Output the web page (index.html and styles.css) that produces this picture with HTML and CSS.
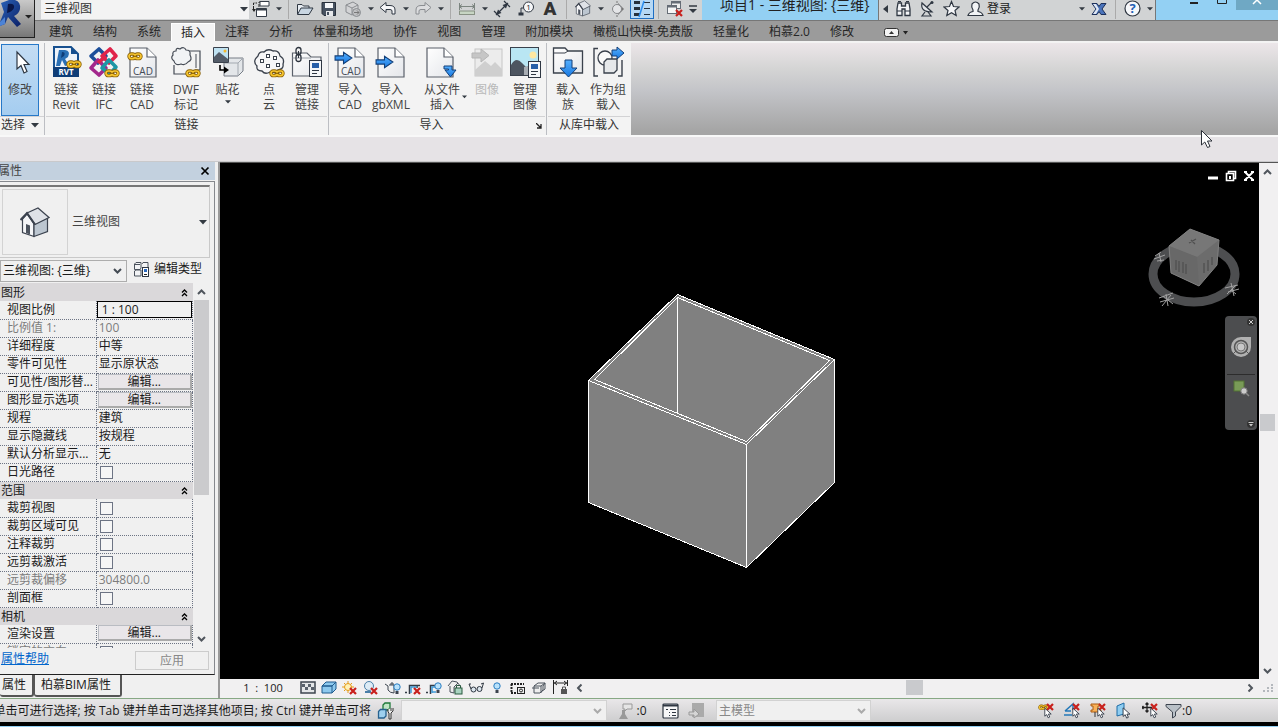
FILE: index.html
```html
<!DOCTYPE html>
<html lang="zh-CN">
<head>
<meta charset="utf-8">
<title>项目1 - 三维视图: {三维}</title>
<link rel="stylesheet" href="styles.css">
</head>
<body>
<svg class="defs" aria-hidden="true">
  <defs>
    <linearGradient id="gBlue" x1="0" y1="0" x2="0" y2="1"><stop offset="0" stop-color="#55b0ff"/><stop offset="1" stop-color="#1878e0"/></linearGradient>
    <linearGradient id="gPage" x1="0" y1="0" x2="1" y2="1"><stop offset="0" stop-color="#fff"/><stop offset="1" stop-color="#e4e6ea"/></linearGradient>
    <linearGradient id="gR" x1="0" y1="0" x2="1" y2="1"><stop offset="0" stop-color="#2a62b8"/><stop offset="1" stop-color="#0b1f66"/></linearGradient>
    <symbol id="chain" viewBox="0 0 16 9"><g fill="none"><g stroke="#8a6208" stroke-width="3.4"><rect x="2" y="2" width="6" height="4.6" rx="2.3"/><rect x="8" y="2" width="6" height="4.6" rx="2.3"/></g><g stroke="#f8c62e" stroke-width="1.700"><rect x="2" y="2" width="6" height="4.600" rx="2.300"/><rect x="8" y="2" width="6" height="4.600" rx="2.300"/></g><path d="M5.500 4.300H10.500" stroke="#8a6208" stroke-width="1.200"/></g></symbol>
    <symbol id="page" viewBox="0 0 28 31"><path d="M1 1H18L27 10V30H1Z" fill="url(#gPage)" stroke="#5b616b" stroke-width="1.200"/><path d="M18 1V10H27" fill="#fff" stroke="#5b616b" stroke-width="1.200"/></symbol>
    <symbol id="arrR" viewBox="0 0 18 13"><path d="M1 4.500H9V1L17 6.500L9 12V8.500H1Z" fill="url(#gBlue)" stroke="#123f78"/></symbol>
    <symbol id="down" viewBox="0 0 8 5"><path d="M0 0H8L4 4.500Z" fill="#333a42"/></symbol>
    <symbol id="redx" viewBox="0 0 8 8"><path d="M1 1L7 7M7 1L1 7" stroke="#c8201c" stroke-width="2.200"/></symbol>
    <symbol id="cur" viewBox="0 0 10 14"><path d="M1 1V11L3.500 9L5.200 13L7.200 12L5.500 8.300H9Z" fill="#fff" stroke="#222b38"/></symbol>
    <symbol id="bulb" viewBox="0 0 8 12"><circle cx="4" cy="4" r="3.200" fill="#b9e2fb" stroke="#2a7cc0"/><path d="M2.500 8H5.500V11H2.500Z" fill="#3c434e"/></symbol>
    <symbol id="house" viewBox="0 0 30 31"><path d="M2.500 12L7 7L14 17V29.500L2.500 25.500Z" fill="#f4f5f7" stroke="#3b424e" stroke-width="1.200"/><path d="M14 17L27.500 11V24.500L14 29.500Z" fill="#bcc6d0" stroke="#3b424e" stroke-width="1.200"/><path d="M7 6L18 1L29 10.500L15 17.500Z" fill="#dfe2e7" stroke="#3b424e" stroke-width="1.200"/><path d="M.5 13L7 6L15 17.500" fill="none" stroke="#3b424e" stroke-width="2"/><path d="M6 17L10 18.500V27.500L6 26Z" fill="#4c535e"/></symbol>
    <symbol id="dbl" viewBox="0 0 7 8"><path d="M1 3.500L3.500 1L6 3.500M1 7L3.500 4.500L6 7" fill="none" stroke="#000" stroke-width="1.300"/></symbol>
    <symbol id="chev" viewBox="0 0 9 6"><path d="M1 1L4.500 4.500L8 1" fill="none" stroke="currentColor" stroke-width="2"/></symbol>
    <symbol id="prop" viewBox="0 0 13 17"><rect x=".5" y=".5" width="12" height="16" fill="#f4f6f8" stroke="#2e3642"/><rect x="3" y="3" width="7" height="5" fill="#275fa8"/><path d="M3 10.500H10M3 13.500H8" stroke="#2e3642"/></symbol>
  </defs>
</svg>

<header class="top">
  <button class="app" aria-label="应用程序菜单">
    <svg width="35" height="38" viewBox="0 0 35 38"><path d="M1 3L9 0H15Q21 2 20 9Q19 14 14 16L21 24L17 27L8 17L5 24L0 26V22L4 12Z" fill="url(#gR)"/><path d="M8 4Q15 3 14 8Q12 12 7 13Z" fill="#0a1748"/><path d="M0 22L5 17V24L0 26Z" fill="#4c83d6"/><path d="M25 15H32L28.500 18.500Z" fill="#222"/></svg>
  </button>
  <div class="title">
    <label class="pick pick-view"><select aria-label="视图"><option>三维视图</option></select><svg width="8" height="5"><use href="#down"/></svg></label>
    <nav class="qat" aria-label="快速访问工具栏">
      <button class="q" aria-label="切换窗口"><svg width="18" height="18"><path d="M1.500 9V3H5M17 2H7V7" fill="none" stroke="#222" stroke-dasharray="3 1"/><path d="M8 1.500H17V6H8ZM4.500 8.500H14.500V16.500H4.500Z" fill="#fff" stroke="#353c47"/><path d="M4.500 9.500H14.500" stroke="#353c47" stroke-width="2"/><path d="M0 9L2 12L4 9" fill="#222"/></svg></button>
      <button class="dd" aria-label="更多窗口"><svg width="6" height="4"><use href="#down"/></svg></button><i class="sep"></i>
      <button class="q" aria-label="打开"><svg width="18" height="16"><path d="M1.500 13V3.500H6L7.500 5H13V7" fill="#e8edf2" stroke="#2f3742"/><path d="M1.500 13.500L5 7H17L13 13.500Z" fill="#c9d6e2" stroke="#2f3742"/></svg></button>
      <button class="q" aria-label="保存"><svg width="16" height="16"><path d="M1 1.500H14.500V14.500H3L1 12.500Z" fill="#465160" stroke="#28303b"/><rect x="4" y="2" width="8" height="5" fill="#f5f6f8"/><rect x="5" y="10" width="7" height="5" fill="#e6e8eb"/><rect x="6" y="11" width="2" height="3" fill="#465160"/></svg></button>
      <button class="q" aria-label="同步"><svg width="18" height="18"><path d="M2 5L9 2L14 5V12L8 15L2 12Z" fill="#d2d3d5" stroke="#898c90"/><path d="M2 5L8 8L14 5M8 8V15" fill="none" stroke="#898c90"/><circle cx="12.500" cy="12.500" r="4" fill="#c0c1c3" stroke="#898c90"/><path d="M10 12.500H15M13 10.500L15 12.500L13 14.500" stroke="#777" fill="none"/></svg></button>
      <button class="dd" aria-label="同步选项"><svg width="6" height="4"><use href="#down"/></svg></button>
      <button class="q" aria-label="撤销"><svg width="18" height="16"><path d="M1 6.500L7 1.500V4.500H11Q16 4.500 16 9V13H13V10Q13 8.500 11 8.500H7V11.500Z" fill="#f6f7f9" stroke="#2f3742"/></svg></button>
      <button class="dd" aria-label="撤销列表"><svg width="6" height="4"><use href="#down"/></svg></button>
      <button class="q" aria-label="重做"><svg width="18" height="16"><path d="M17 6.500L11 1.500V4.500H7Q2 4.500 2 9V13H5V10Q5 8.500 7 8.500H11V11.500Z" fill="#dcdddf" stroke="#8a8d91"/></svg></button>
      <button class="dd" aria-label="重做列表"><svg width="6" height="4"><use href="#down"/></svg></button><i class="sep"></i>
      <button class="q" aria-label="测量"><svg width="18" height="14"><path d="M1 4.500H17M1.500 1V8M16.500 1V8M1 4.500L4 2.500M1 4.500L4 6.500M17 4.500L14 2.500M17 4.500L14 6.500" stroke="#7c8580"/><rect x="1.500" y="9" width="15" height="3.500" fill="#c7d5c3" stroke="#889184"/></svg></button>
      <button class="dd" aria-label="测量选项"><svg width="6" height="4"><use href="#down"/></svg></button>
      <button class="q" aria-label="对齐尺寸标注"><svg width="18" height="18"><path d="M3 15L15 3M1 11L7 17M11 1L17 7" stroke="#2f3742" stroke-width="1.200"/><path d="M3 15L5 9.500L8.500 13ZM15 3L9.500 5L13 8.500Z" fill="#2f3742"/></svg></button>
      <button class="q" aria-label="按类别标记"><svg width="18" height="18"><circle cx="11.500" cy="7" r="5" fill="#f6f7f9" stroke="#2f3742"/><text class="g-tag" x="11.500" y="10">1</text><path d="M6.500 8H4V14" fill="none" stroke="#2f3742"/><path d="M1.500 14H6.500" stroke="#2f3742" stroke-width="3"/></svg></button>
      <button class="q letter">A</button><i class="sep"></i>
      <button class="q" aria-label="默认三维视图"><svg width="16" height="17"><use href="#house"/></svg></button>
      <button class="dd" aria-label="三维视图选项"><svg width="6" height="4"><use href="#down"/></svg></button>
      <button class="q" aria-label="剖面"><svg width="14" height="16"><path d="M6 2V0M6 14V16" stroke="#777"/><path d="M7 2L13 8L7 14Z" fill="#777"/><circle cx="6" cy="8" r="4.500" fill="#e4e5e7" stroke="#85878a"/></svg></button>
      <button class="q on" aria-label="细线"><svg width="18" height="18"><path d="M1 2.500H7M1 8.500H7M1 14.500H7" stroke="#26303d" stroke-width="3"/><path d="M11 2.500H17M11 8.500H17M11 14.500H17" stroke="#26303d"/><path d="M11 1L6 17" stroke="#2c8dee" stroke-width="1.500"/></svg></button><i class="sep"></i>
      <button class="q" aria-label="关闭隐藏窗口"><svg width="18" height="18"><rect x="5.500" y="1.500" width="9" height="7" fill="#eee" stroke="#666d76"/><rect x="1.500" y="5.500" width="9" height="8" fill="#f5f6f7" stroke="#666d76"/><path d="M5 2.500H15M1 6.500H11" stroke="#666d76" stroke-width="2"/><svg x="9" y="9" width="8" height="8"><use href="#redx"/></svg></svg></button>
      <button class="dd" aria-label="自定义"><svg width="8" height="8"><path d="M0 1H8" stroke="#333a42" stroke-width="1.500"/><path d="M0 4H8L4 8Z" fill="#333a42"/></svg></button>
    </nav>
    <h1 class="doc">项目1 - 三维视图: {三维}</h1>
    <nav class="info" aria-label="信息中心">
      <button class="dd wide" aria-label="折叠"><svg width="5" height="8"><path d="M5 0V8L0 4Z" fill="#333a42"/></svg></button>
      <button class="q" aria-label="搜索"><svg width="17" height="17"><path d="M3 3L2 9V15.500H7V9H10V15.500H15V9L14 3H10.500V6H6.500V3Z" fill="#f4f5f7" stroke="#2f3742" stroke-width="1.300"/><path d="M2 11H7M10 11H15M3 1.500H6M11 1.500H14" stroke="#2f3742"/></svg></button>
      <button class="q" aria-label="通讯中心"><svg width="17" height="17"><path d="M3 3Q1 12 13 12Z" fill="#e4e7ea" stroke="#2f3742" stroke-width="1.200"/><path d="M8 7L13 2M6 12L3 16H12L9 12" fill="none" stroke="#2f3742" stroke-width="1.200"/><circle cx="13" cy="2.500" r="1.500" fill="#2f3742"/></svg></button>
      <button class="q" aria-label="收藏夹"><svg width="17" height="17"><path d="M8.500 1.500L10.500 6.500L16 7L12 10.500L13.200 15.500L8.500 12.800L3.800 15.500L5 10.500L1 7L6.500 6.500Z" fill="#f5f6f8" stroke="#2f3742" stroke-width="1.200"/></svg></button>
      <button class="q" aria-label="用户"><svg width="17" height="17"><path d="M1 15.500Q2 12 6 11.500V10Q4 7 5 4Q8.500 0 12 4Q13 7 11 10V11.500Q15 12 16 15.500Z" fill="#f2f4f6" stroke="#2f3742" stroke-width="1.200"/></svg></button>
      <button class="login">登录</button>
      <button class="dd" aria-label="登录选项"><svg width="6" height="4"><use href="#down"/></svg></button>
      <button class="q" aria-label="Exchange"><svg width="16" height="14"><path d="M1 1.500H6L8 4.500L10 1.500H15L11 7L15 12.500H10L8 9.500L6 12.500H1L5 7Z" fill="#4a73bb" stroke="#1d3059"/><path d="M2 2H5L8 7L5 12H2L5.500 7Z" fill="#dfe7f3"/></svg></button><i class="sep"></i>
      <button class="q" aria-label="帮助"><svg width="17" height="17"><circle cx="8.500" cy="8.500" r="7.500" fill="#f6f8fb" stroke="#2f3742" stroke-width="1.200"/><text class="g-help" x="8.500" y="13">?</text></svg></button>
      <button class="dd" aria-label="帮助选项"><svg width="6" height="4"><use href="#down"/></svg></button>
    </nav>
    <div class="win">
      <button aria-label="最小化"><svg width="10" height="10"><path d="M1 3H9" stroke="#222" stroke-width="2"/></svg></button>
      <button aria-label="最大化"><svg width="10" height="10"><path d="M.5 0V3.500H9.500V0" fill="none" stroke="#222"/></svg></button>
      <button class="x" aria-label="关闭"><svg width="10" height="10"><path d="M1 4L5 0L9 4" fill="none" stroke="#fff" stroke-width="1.500"/></svg></button>
    </div>
  </div>
  <nav class="tabs" aria-label="功能区选项卡">
    <button>建筑</button><button>结构</button><button>系统</button><button class="act">插入</button><button>注释</button><button>分析</button><button>体量和场地</button><button>协作</button><button>视图</button><button>管理</button><button>附加模块</button><button>橄榄山快模-免费版</button><button>轻量化</button><button>柏慕2.0</button><button>修改</button>
    <button class="mini" aria-label="最小化功能区"><svg width="25" height="9"><rect x=".5" y=".5" width="14" height="8" rx="2" fill="#f3f3f3" stroke="#333"/><path d="M5 6H10L7.500 3Z" fill="#333"/><path d="M19 3H24L21.500 6.500Z" fill="#222"/></svg></button>
  </nav>
</header>

<section class="ribbon" aria-label="插入">
  <div class="panel p-sel">
    <div class="cmds"><button class="cmd mod"><svg width="32" height="32"><path d="M13 6V23L17 19.500L20 27L23 25.500L20 18.500H25Z" fill="#fff" stroke="#2d3642" stroke-width="1.200"/></svg><span>修改</span></button></div>
    <button class="cap">选择 <svg width="8" height="5"><use href="#down"/></svg></button>
  </div>
  <div class="panel p-link">
    <div class="cmds">
      <button class="cmd"><svg width="32" height="32"><path d="M4 1H21L28 8V30H4Z" fill="#eef3f9" stroke="#17508f" stroke-width="2"/><path d="M21 1V8H28" fill="#17508f"/><path d="M9 4H15Q21 5 18 11L15 13L19 19L15 20L12 14L10 20H6Z" fill="#2a6fb4"/><path d="M12 6Q16 6 14 10L11 12Z" fill="#0f3d77"/><rect x="3" y="21" width="26" height="10" fill="#0f3d77"/><text class="g-rvt" x="16" y="29">RVT</text><svg x="16" y="14" width="16" height="9"><use href="#chain"/></svg></svg><span>链接<br>Revit</span></button>
      <button class="cmd"><svg width="32" height="32"><g fill="none" stroke-width="3.600" stroke-linejoin="round"><path d="M3 10L11 3L18 10L10 17Z" stroke="#1c4f9a"/><path d="M14 10L22 3L28 10L21 17Z" stroke="#e0244a"/><path d="M3 22L10 14L18 22L11 29Z" stroke="#a3288c"/><path d="M14 22L21 14L28 21L22 28Z" stroke="#1d97a5"/><path d="M10 17L18 10" stroke="#e0244a"/></g><svg x="16" y="23" width="16" height="9"><use href="#chain"/></svg></svg><span>链接<br>IFC</span></button>
      <button class="cmd"><svg width="32" height="32"><svg x="3" y="1" width="28" height="31"><use href="#page"/></svg><svg x="1" y="6" width="16" height="9"><use href="#chain"/></svg><text class="g-cad" x="17" y="29">CAD</text></svg><span>链接<br>CAD</span></button>
      <button class="cmd"><svg width="32" height="32"><path d="M10 5H30V24H25M4 19V28H16" fill="none" stroke="#454b55" stroke-width="1.200"/><path d="M26 8V22" stroke="#454b55"/><path d="M6 5Q6 1 10 3Q14 0 16 4Q21 4 20 9Q23 14 18 16Q15 20 11 18Q5 20 4 15Q0 12 3 9Q2 5 6 5Z" fill="#f1f3f5" stroke="#454b55" stroke-width="1.200"/><svg x="15" y="23" width="16" height="9"><use href="#chain"/></svg></svg><span>DWF<br>标记</span></button>
      <button class="cmd"><svg width="32" height="32"><path d="M12 17L17 12H31V25L26 30H12Z" fill="#e3e6e9" stroke="#767d86"/><path d="M12 17H26V30M26 17L31 12" fill="none" stroke="#a3a9b0"/><path d="M1.500 1.500H16.500V16.500H1.500Z" fill="#bfe2f2" stroke="#3a414c"/><path d="M2 11L7 6L16 13V16H2Z" fill="#535c68"/><circle cx="13" cy="5" r="1.500" fill="#f4b72a"/><path d="M8 19V24H13" fill="none" stroke="#000" stroke-width="1.600"/><path d="M12 20.500L17 24L12 27.500Z"/></svg><span>贴花</span><svg class="tick" width="6" height="4"><use href="#down"/></svg></button>
      <button class="cmd gapped"><svg width="32" height="32"><path d="M5 10Q6 5 11 6Q15 2 20 5Q26 4 27 10Q32 13 30 18Q31 23 25 24Q22 28 17 26Q12 29 9 25Q3 25 4 20Q-1 15 5 10Z" fill="#f6f6f7" stroke="#3a414c" stroke-width="1.300"/><g fill="#fff" stroke="#3a414c"><rect x="13.500" y="8.500" width="3" height="3"/><rect x="20.500" y="10.500" width="3" height="3"/><rect x="7.500" y="13.500" width="3" height="3"/><rect x="13.500" y="18.500" width="3" height="3"/><rect x="23.500" y="17.500" width="3" height="3"/></g><svg x="16" y="23" width="16" height="9"><use href="#chain"/></svg></svg><span>点<br>云</span></button>
      <button class="cmd"><svg width="32" height="32"><path d="M1.500 7V30H30V11H20L16 7Z" fill="url(#gPage)" stroke="#5b616b" stroke-width="1.200"/><path d="M1.500 12H20" stroke="#9aa0a8"/><g fill="none" stroke="#2e353f" stroke-width="1.300"><rect x="5" y="1.500" width="5" height="7" rx="2.500"/><rect x="5" y="8.500" width="5" height="7" rx="2.500"/></g><path d="M7.500 5V12" stroke="#2e353f"/><svg x="18" y="14" width="13" height="17"><use href="#prop"/></svg></svg><span>管理<br>链接</span></button>
    </div>
    <div class="cap">链接</div>
  </div>
  <div class="panel p-imp">
    <div class="cmds">
      <button class="cmd"><svg width="32" height="32"><svg x="3" y="1" width="28" height="31"><use href="#page"/></svg><svg x="0" y="5" width="19" height="14"><use href="#arrR"/></svg><text class="g-cad" x="17" y="29">CAD</text></svg><span>导入<br>CAD</span></button>
      <button class="cmd"><svg width="32" height="32"><svg x="2" y="1" width="28" height="31"><use href="#page"/></svg><svg x="0" y="9" width="19" height="14"><use href="#arrR"/></svg></svg><span>导入<br>gbXML</span></button>
      <button class="cmd gapped3"><svg width="32" height="32"><svg x="0" y="1" width="28" height="31"><use href="#page"/></svg><path d="M18 20H26V24H30L24.500 31L19 24H22.500V23H18Z" fill="url(#gBlue)" stroke="#123f78"/></svg><span>从文件<br>插入</span><svg class="side" width="5" height="4"><use href="#down"/></svg></button>
      <button class="cmd off" disabled><svg width="32" height="32"><rect x="4" y="3" width="27" height="27" fill="#ececec" stroke="#c6c6c6"/><path d="M4 24L14 15L20 20L24 16L31 23V30H4Z" fill="#cfcfcf"/><path d="M1 7H10V3L18 9.500L10 16V12H1Z" fill="#c6c6c6" stroke="#b5b5b5"/></svg><span>图像</span></button>
      <button class="cmd"><svg width="32" height="32"><rect x="1.500" y="1.500" width="28" height="28" fill="#b9e6f3" stroke="#3a414c"/><path d="M2 19Q7 10 13 17L17 21L29 17V29H2Z" fill="#4d5560"/><path d="M15 21L29 18V29H15Z" fill="#a8adb3"/><circle cx="24" cy="9" r="3.500" fill="#ffe7a0"/><svg x="19" y="15" width="13" height="17"><use href="#prop"/></svg></svg><span>管理<br>图像</span></button>
    </div>
    <div class="cap"><span>导入</span><button class="launch" aria-label="导入设置"><svg width="6" height="6"><path d="M0 0L5 5M5 1V5H1" fill="none" stroke="#222" stroke-width="1.300"/></svg></button></div>
  </div>
  <div class="panel p-lib">
    <div class="cmds">
      <button class="cmd"><svg width="32" height="32"><path d="M1.500 27V2H13L16 5H30.500V27Z" fill="url(#gPage)" stroke="#3a414c" stroke-width="1.300"/><path d="M1.500 7H13L16 5" fill="none" stroke="#3a414c"/><path d="M13 14H20V22H25L16.500 31L8 22H13Z" fill="url(#gBlue)" stroke="#123f78"/></svg><span>载入<br>族</span></button>
      <button class="cmd"><svg width="32" height="32"><path d="M6 2.500H2V30H6M26 30H30V14" fill="none" stroke="#3a414c" stroke-width="1.400"/><circle cx="13" cy="12" r="7" fill="#fafafa" stroke="#3a414c" stroke-width="1.300"/><path d="M12 16L15 13H25V24L22 27H12Z" fill="#e6e8ea" stroke="#3a414c" stroke-width="1.300"/><path d="M20 4H25V1L32 7L25 13V10H20Z" fill="url(#gBlue)" stroke="#123f78"/></svg><span>作为组<br>载入</span></button>
    </div>
    <div class="cap">从库中载入</div>
  </div>
  <div class="rest"></div>
</section>
<div class="options"></div>

<main class="work">
  <aside class="palette">
    <div class="ptitle"><h2>属性</h2><button aria-label="关闭属性"><svg width="10" height="10"><path d="M1.500 1.500L8.500 8.500M8.500 1.500L1.500 8.500" stroke="#000" stroke-width="1.700"/></svg></button></div>
    <div class="pbody">
      <button class="type"><span class="thumb"><svg width="30" height="31"><use href="#house"/></svg></span><span class="tname">三维视图</span><svg width="8" height="5"><use href="#down"/></svg></button>
      <div class="inst">
        <label class="pick pick-inst"><select aria-label="类型过滤器"><option>三维视图: {三维}</option></select><svg width="9" height="6"><use href="#chev"/></svg></label>
        <button class="etype"><svg width="17" height="17"><path d="M1.500 3L3 1.500H8V7L7 8.500H1.500ZM9 3L10 1.500H15V7M1.500 10L3 9H8V15H1.500ZM1.500 3.500H7" fill="#f2f3f5" stroke="#4b525c"/><rect x="9.500" y="6.500" width="6" height="9" fill="#fff" stroke="#2e3642"/><rect x="11" y="8" width="3" height="3" fill="#2c6ac0"/><path d="M11 13.500H14" stroke="#222"/></svg>编辑类型</button>
      </div>
      <div class="gridbox">
        <div class="props"><table>
          <tr class="grp"><th colspan="2">图形<svg width="7" height="8"><use href="#dbl"/></svg></th></tr>
          <tr><th>视图比例</th><td class="edit"><input value="1 : 100" aria-label="视图比例"></td></tr>
          <tr class="ro"><th>比例值 1:</th><td>100</td></tr>
          <tr><th>详细程度</th><td>中等</td></tr>
          <tr><th>零件可见性</th><td>显示原状态</td></tr>
          <tr><th>可见性/图形替...</th><td><button>编辑...</button></td></tr>
          <tr><th>图形显示选项</th><td><button>编辑...</button></td></tr>
          <tr><th>规程</th><td>建筑</td></tr>
          <tr><th>显示隐藏线</th><td>按规程</td></tr>
          <tr><th>默认分析显示...</th><td>无</td></tr>
          <tr><th><label for="c1">日光路径</label></th><td><input type="checkbox" id="c1"></td></tr>
          <tr class="grp"><th colspan="2">范围<svg width="7" height="8"><use href="#dbl"/></svg></th></tr>
          <tr><th><label for="c2">裁剪视图</label></th><td><input type="checkbox" id="c2"></td></tr>
          <tr><th><label for="c3">裁剪区域可见</label></th><td><input type="checkbox" id="c3"></td></tr>
          <tr><th><label for="c4">注释裁剪</label></th><td><input type="checkbox" id="c4"></td></tr>
          <tr><th><label for="c5">远剪裁激活</label></th><td><input type="checkbox" id="c5"></td></tr>
          <tr class="ro"><th>远剪裁偏移</th><td>304800.0</td></tr>
          <tr><th><label for="c6">剖面框</label></th><td><input type="checkbox" id="c6"></td></tr>
          <tr class="grp"><th colspan="2">相机<svg width="7" height="8"><use href="#dbl"/></svg></th></tr>
          <tr><th>渲染设置</th><td><button>编辑...</button></td></tr>
          <tr class="ro"><th><label for="c7">锁定的方向</label></th><td><input type="checkbox" id="c7" disabled></td></tr>
        </table></div>
        <div class="vbar"><svg class="flip" width="9" height="6"><use href="#chev"/></svg><i></i><svg width="9" height="6"><use href="#chev"/></svg></div>
      </div>
      <div class="pfoot"><a href="#help">属性帮助</a><button disabled>应用</button></div>
    </div>
    <div class="ptabs"><button class="act">属性</button><button>柏慕BIM属性</button></div>
  </aside>

  <section class="view" aria-label="三维视图">
    <div class="canvas">
      <svg class="scene" viewBox="220 163 1039 516"><path d="M588.500 380.500L677.500 294.500L834.500 359.500V482.500L746.500 567.500L588.500 502.500Z" fill="#808080"/><path d="M588.500 380.500L677.500 294.500L834.500 359.500V482.500L746.500 567.500L588.500 502.500ZM588.500 380.500L746.500 444.500L834.500 359.500M746.500 444.500V567.500M594.500 379.500L677.500 297.500L829.500 360.500L746.500 441.500ZM677.500 297.500V413.500" fill="none" stroke="#fff" shape-rendering="crispEdges"/></svg>
      <div class="mdi">
        <button aria-label="最小化视图"><svg width="12" height="12"><path d="M1 8H11" stroke="#fff" stroke-width="3"/></svg></button>
        <button aria-label="还原视图"><svg width="12" height="12"><path d="M3.500 3V1.500H10.500V8.500H9M1.500 3.500H8.500V10.500H1.500Z" fill="none" stroke="#fff" stroke-width="1.600"/><rect x="4" y="6" width="2" height="3" fill="#fff"/></svg></button>
        <button aria-label="关闭视图"><svg width="12" height="12"><path d="M2 2L10 10M10 2L2 10M1 2H4M8 2H11M1 10H4M8 10H11" stroke="#fff" stroke-width="2"/></svg></button>
      </div>
      <svg class="cube" width="94" height="82"><ellipse cx="46" cy="46" rx="41" ry="28" fill="none" stroke="#4d4e50" stroke-width="9"/><path d="M21 18L42 1L71 12L69 37L51 58L23 45Z" fill="#6c6c6c"/><path d="M21 18L42 1L71 12L49 29Z" fill="#777"/><path d="M21 18L49 29L51 58L23 45Z" fill="#686868"/><path d="M21 18L42 1L71 12L69 37L51 58L23 45Z" fill="none" stroke="#808080"/><path d="M41 15L48 11M43 12L47 16M28 32V42M31 33V44M35 34V45M38 36V46M56 35V45M60 32V43M64 29V37" stroke="#505050" stroke-width="1.300"/><g stroke="#a2a2a2" fill="none"><path d="M7 28L13 24M6 31L17 27M9 33L16 32M11 25L13 34M11 70L25 65M12 74L26 70M14 78L23 67M18 66L20 78M15 68L25 76M77 60L90 57M80 64L91 61M83 55L86 68M79 66L88 57M88 66L83 62"/></g></svg>
      <div class="nav">
        <button aria-label="关闭导航栏"><svg width="8" height="8"><circle cx="4" cy="4" r="4" fill="#333"/><path d="M2 2L6 6M6 2L2 6" stroke="#ccc"/></svg></button>
        <button class="wheel" aria-label="控制盘"><svg width="22" height="22"><path d="M11 1H21V11A10 10 0 1 1 11 1Z" fill="#b1b1b1"/><circle cx="11" cy="11" r="6.500" fill="none" stroke="#555" stroke-width="1.500"/><circle cx="11" cy="11" r="4" fill="#c8c8c8" stroke="#777"/><path d="M6 15L3 18M16 15L19 18" stroke="#555"/></svg></button>
        <button class="zoom" aria-label="区域缩放"><svg width="18" height="18"><rect x="2" y="1" width="10" height="10" fill="#799b57" stroke="#527235"/><circle cx="12" cy="11" r="3.200" fill="#ccc" stroke="#777"/><path d="M14 13L17 16" stroke="#888" stroke-width="1.500"/></svg></button>
        <button aria-label="自定义导航栏"><svg width="8" height="8"><circle cx="4" cy="4" r="4" fill="#333"/><path d="M1.500 2.500H6.500" stroke="#ccc"/><path d="M2 4H6L4 6.500Z" fill="#ccc"/></svg></button>
      </div>
    </div>
    <div class="vs"><svg class="flip" width="9" height="6"><use href="#chev"/></svg><i></i><svg width="9" height="6"><use href="#chev"/></svg></div>
    <div class="vcb">
      <button class="scale">1 &nbsp;: &nbsp;100</button>
      <button aria-label="详细程度"><svg width="16" height="14"><rect x="1" y="1" width="14" height="11" fill="#e4e6e8" stroke="#3d444f" stroke-width="1.500"/><path d="M2 3H5V6H2ZM8 3H11V6H8ZM5 6H8V9H5ZM11 6H14V9H11Z" fill="#59616c"/></svg></button>
      <button aria-label="视觉样式"><svg width="16" height="14"><path d="M1 5L5 1H15L11 5ZM1 5H11V12H1ZM11 5L15 1V8L11 12" fill="#8dc9ee" stroke="#1e5a8d"/></svg></button>
      <button aria-label="日光路径"><svg width="16" height="14"><path d="M6 0V12M0 6H12M2 2L10 10M10 2L2 10" stroke="#e49b18"/><circle cx="6" cy="6" r="3.500" fill="#fff1b5" stroke="#e49b18"/><svg x="7" y="6" width="8" height="8"><use href="#redx"/></svg></svg></button>
      <button aria-label="阴影"><svg width="16" height="14"><circle cx="6" cy="5" r="4.500" fill="#dcebf5" stroke="#4a7fa8"/><path d="M2 11H8" stroke="#4a7fa8" stroke-width="2"/><svg x="7" y="6" width="8" height="8"><use href="#redx"/></svg></svg></button>
      <button aria-label="渲染"><svg width="17" height="14"><path d="M1 3L4 5V9Q6 12 10 12V4H5M7 4V2H9V4" fill="#f0f0f0" stroke="#3d444f"/><svg x="9" y="2" width="8" height="12"><use href="#bulb"/></svg></svg></button>
      <button aria-label="裁剪视图"><svg width="16" height="14"><path d="M0 11.500H2M4.500 13V4.500H15M12 4V7" fill="none" stroke="#333b46" stroke-width="1.500"/><path d="M6 12V6H12" fill="none" stroke="#3f9ad6" stroke-width="1.500"/><svg x="8" y="6" width="8" height="8"><use href="#redx"/></svg></svg></button>
      <button aria-label="显示裁剪区域"><svg width="16" height="14"><path d="M0 11.500H2M4.500 13V4.500H10" fill="none" stroke="#333b46" stroke-width="1.500"/><path d="M6 12V6H10M6 11H10" fill="none" stroke="#3f9ad6" stroke-width="1.500"/><svg x="8" y="1" width="8" height="12"><use href="#bulb"/></svg></svg></button>
      <button aria-label="锁定三维视图"><svg width="16" height="15"><path d="M1 6L5 1L10 2L14 7M3 6V12L7 13V7L11 3" fill="#eee" stroke="#4b525c"/><rect x="8" y="8" width="7" height="6" fill="#a9d3c0" stroke="#28583f"/><path d="M9.500 8V5.500H13.500V8" fill="none" stroke="#28583f"/></svg></button>
      <button aria-label="临时隐藏/隔离"><svg width="17" height="14"><circle cx="5.500" cy="8.500" r="2.500" fill="#dde6ee" stroke="#2f3742"/><circle cx="11.500" cy="8" r="2.500" fill="#dde6ee" stroke="#2f3742"/><path d="M3 8L1 3H3M14 7L15.500 2L13 3" fill="none" stroke="#2f3742"/></svg></button>
      <button aria-label="显示隐藏的图元"><svg width="16" height="14"><svg x="4" y="1" width="8" height="12"><use href="#bulb"/></svg></svg></button>
      <button aria-label="临时视图属性"><svg width="16" height="14"><path d="M1 3H14M1 12H8M1.500 3V12" stroke="#222" stroke-width="2" stroke-dasharray="2 1"/><rect x="7.500" y="6.500" width="7" height="6" fill="#eee" stroke="#222"/><circle cx="11" cy="9.500" r="1.500" stroke="#222" fill="none"/></svg></button>
      <button aria-label="分析模型"><svg width="16" height="14"><path d="M3 5L7 2H14L12 5V9L9 12H3ZM3 5H10V12M10 5L14 2V8L10 11M1 7H8" fill="#eee" stroke="#4b525c"/></svg></button>
      <button aria-label="约束"><svg width="17" height="15"><path d="M1.500 0V14M15.500 0V6M2 3H15M5 1L2.500 3L5 5M12 1L14.500 3L12 5" fill="none" stroke="#222"/><rect x="9" y="9" width="6" height="5" fill="#555"/><path d="M10.500 9V7H13.500V9" stroke="#555" fill="none"/></svg></button>
      <div class="hs"><svg class="left" width="9" height="6"><use href="#chev"/></svg><i></i><svg class="right" width="9" height="6"><use href="#chev"/></svg></div>
    </div>
    <div class="grip"><svg width="11" height="9"><path d="M8 1H10M4 4H6M8 4H10M0 7H2M4 7H6M8 7H10" stroke="#b4b8bd" stroke-width="2"/></svg></div>
  </section>
</main>

<footer class="status">
  <p>单击可进行选择; 按 Tab 键并单击可选择其他项目; 按 Ctrl 键并单击可将</p>
  <button class="wset" aria-label="工作集"><svg width="18" height="18"><path d="M6 3L8 1H13V6L11 8H6Z" fill="#bfe5c4" stroke="#1e7a3a" stroke-width="1.300"/><path d="M1.500 9.500L3.500 7.500H9V14L7 16H1.500Z" fill="#9dcfee" stroke="#27618e" stroke-width="1.300"/><path d="M11 7V10L12 11V17H14V11L16 9V6M14 6V9" fill="#eee" stroke="#333"/></svg></button>
  <label class="pick dim s1"><select aria-label="活动工作集"><option></option></select><svg width="9" height="6"><use href="#chev"/></svg></label>
  <button class="req"><svg width="18" height="18"><path d="M6 2H15V7H10L8 9V7H6Z" fill="#e5e5e5" stroke="#999"/><path d="M5 8H8V12L11 17H2L5 12Z" fill="#999"/></svg>:0</button>
  <button class="sq" aria-label="设计选项"><svg width="18" height="18"><rect x="1" y="2" width="15" height="14" rx="1" fill="#f7f7f8" stroke="#2f3742" stroke-width="1.200"/><path d="M1 3.500H16" stroke="#2f3742" stroke-width="2"/><path d="M4 7.500H6M7 10.500H8M7 13.500H8M8 7.500H14M10 10.500H14M10 13.500H14" stroke="#2f3742"/></svg></button>
  <button class="sq" aria-label="添加到集"><svg width="18" height="18"><rect x="4" y="1" width="12" height="14" fill="#aaa"/><path d="M1 10H6V7L11 12L6 16V13H1Z" fill="#d5d5d5" stroke="#999"/></svg></button>
  <label class="pick dim s2"><select aria-label="设计选项集"><option>主模型</option></select><svg width="9" height="6"><use href="#chev"/></svg></label>
  <div class="sel">
    <button aria-label="选择链接"><svg width="16" height="17"><svg x="0" y="2" width="11" height="7"><use href="#chain"/></svg><svg x="8" y="1" width="8" height="8"><use href="#redx"/></svg><svg x="6" y="5" width="8" height="12"><use href="#cur"/></svg></svg></button>
    <button aria-label="选择基线图元"><svg width="16" height="17"><path d="M1 9L9 2V8M1 9H7M0 13H8" stroke="#2478b8" stroke-width="1.500" fill="none"/><svg x="8" y="1" width="8" height="8"><use href="#redx"/></svg><svg x="8" y="5" width="8" height="12"><use href="#cur"/></svg></svg></button>
    <button aria-label="选择锁定图元"><svg width="16" height="17"><path d="M1 2H10V4H8V8H11V10H1V8H3V4H1Z" fill="#f7b158" stroke="#ad5d12"/><path d="M5 10V15" stroke="#333"/><svg x="8" y="1" width="8" height="8"><use href="#redx"/></svg><svg x="7" y="5" width="8" height="12"><use href="#cur"/></svg></svg></button>
    <button aria-label="按面选择"><svg width="16" height="17"><path d="M1 4L8 1V12L1 14Z" fill="#8fcdf1" stroke="#1e6ca6"/><svg x="6" y="5" width="9" height="12"><use href="#cur"/></svg></svg></button>
    <button aria-label="选择时拖曳"><svg width="16" height="17"><path d="M5 1V10M0 5.500H10M3.500 2.500L5 1L6.500 2.500M3.500 8.500L5 10L6.500 8.500M1.500 4L0 5.500L1.500 7" stroke="#222" fill="none" stroke-width="1.300"/><svg x="8" y="1" width="8" height="8"><use href="#redx"/></svg><svg x="8" y="5" width="8" height="12"><use href="#cur"/></svg></svg></button>
    <button class="filt"><svg width="17" height="16"><path d="M1 1.500H16V3.500L10.500 9V13L7.500 15V9L1 3.500Z" fill="#b9c0c7" stroke="#3d444f"/></svg>:0</button>
  </div>
</footer>
<div class="edge"></div>
<svg class="pointer" width="13" height="20"><path d="M1.500 1.500V16L4.800 13L7.500 18.500L10 17.500L7.500 12H12Z" fill="#fff" stroke="#2b3038"/></svg>
</body>
</html>
```
FILE: styles.css
```css
* { box-sizing: border-box; }
body {
  margin: 0;
  height: 100vh;
  display: flex;
  flex-direction: column;
  overflow: hidden;
  background: #e8e6e9;
  color: #1b1b1b;
  font: 12px/16px "Open Sans", "Noto Sans CJK SC", sans-serif;
}
button, input, select { font: inherit; color: inherit; margin: 0; padding: 0; border: 0; background: none; }
button { display: flex; align-items: center; justify-content: center; white-space: nowrap; }
svg { display: block; flex: none; }
h1, h2, p { margin: 0; font-weight: normal; }
.defs { position: absolute; width: 0; height: 0; }

/* lettering inside icons */
.g-cad, .g-rvt, .g-tag, .g-help { text-anchor: middle; font-family: "Open Sans", sans-serif; }
.g-cad { font-size: 10px; fill: #454b55; }
.g-rvt { font-size: 8px; font-weight: bold; fill: #fff; }
.g-tag { font-size: 8px; fill: #222; }
.g-help { font-size: 13px; font-weight: bold; fill: #1f5fb5; }

.pick { display: grid; align-items: center; }
.pick select { grid-area: 1 / 1; width: 100%; height: 100%; appearance: none; }
.pick svg { grid-area: 1 / 1; justify-self: end; margin-right: 4px; pointer-events: none; color: #444b54; }

/* title bar and tabs */
.top { display: grid; grid-template-columns: 35px 1fr; grid-template-rows: 21px 20px; background: #9b9b9b; }
.app { grid-row: 1 / 3; align-self: start; background: linear-gradient(#c9c9c9, #777); border: solid #222; border-width: 0 1px 1px 0; height: 38px; }
.title { display: flex; background: #d1d3d4; border-bottom: 1px solid #777; }
.pick-view { width: 208px; height: 19px; margin: 0 0 0 6px; background: #f3f3f3; }
.pick-view select { padding-left: 3px; padding-bottom: 2px; color: #333; }
.pick-view svg { margin-right: 1px; }
.qat { display: flex; align-items: center; padding: 0 4px 3px 0; height: 20px; }
.q { width: 24px; height: 20px; flex: none; }
.q.on { background: #b6d8f5; border: 1px solid #1f6fc4; }
.letter { font-family: Roboto, sans-serif; font-weight: 900; font-size: 19px; color: #333; }
.dd { width: 11px; height: 20px; flex: none; }
.dd.wide { width: 12px; }
.sep { width: 9px; height: 20px; flex: none; background: linear-gradient(#aaa, #aaa) center / 1px 100% no-repeat; }
.doc { flex: 1; background: #93d0f3; color: #222; font-size: 14px; line-height: 20px; height: 20px; padding: 0 0 11px 18px; white-space: nowrap; display: flex; align-items: center; }
.info { display: flex; align-items: center; width: 278px; height: 20px; padding-bottom: 3px; border: solid #777; border-width: 0 1px; }
.login { flex: 1; justify-content: flex-start; }
.win { display: flex; width: 122px; background: #93d0f3; padding-left: 24px; }
.win button { width: 28px; height: 10px; align-items: flex-start; }
.win .x { width: 42px; background: #6fa8c4; }
.tabs { display: flex; padding: 2px 0 0 4px; height: 20px; }
.tabs button { padding: 0 10px; height: 18px; color: #262626; }
.tabs .act { padding: 0 9px; border: 1px solid #fff; border-bottom: 0; background: #f3f3f3; }
.tabs .mini { padding-left: 20px; }

/* ribbon */
.ribbon { display: flex; height: 96px; background: #f3f3f3; border-bottom: 2px solid #f8f8f8; }
.panel { display: flex; flex-direction: column; border-right: 1px solid #bcbec3; margin-top: 2px; flex: none; }
.p-sel { width: 45px; }
.p-link { width: 284px; }
.p-imp { width: 218px; }
.p-lib { width: 84px; border-right: 0; }
.cmds { display: flex; height: 74px; padding: 3px 0 0 2px; }
.p-sel .cmds { padding: 1px 0 0 1px; }
.cmd { width: 38px; flex: none; flex-direction: column; justify-content: flex-start; color: #444; position: relative; }
.cmd > span { margin-top: 4px; line-height: 15px; text-align: center; }
.cmd .tick { margin-top: 3px; }
.cmd .side { position: absolute; right: 1px; top: 49px; }
.cmd:disabled { color: #b9b9b9; }
.mod { height: 72px; padding-top: 1px; border: 1px solid #2678c8; background: linear-gradient(#c3dcf3, #a5cdf0); }
.p-link .cmd:nth-child(4) { width: 50px; }
.p-link .cmd:nth-child(5) { width: 33px; }
.gapped { margin-left: 6px; }
.gapped3 { margin-left: 3px; }
.p-imp .cmd:nth-child(2) { width: 44px; }
.p-imp .cmd:nth-child(3) { width: 52px; }
.p-lib .cmd:nth-child(2) { width: 42px; }
.cap { flex: 1; display: flex; align-items: center; justify-content: center; border-top: 1px solid #d2d2d4; margin: 0 1px; position: relative; color: #333; padding-bottom: 2px; }
.p-sel .cap { border: 0; border-top: 1px solid #d2d2d4; margin: 0; padding-right: 4px; gap: 6px; }
.p-imp .cap { padding-right: 12px; }
.launch { position: absolute; right: 3px; top: 6px; }
.rest { flex: 1; margin-top: 2px; background: linear-gradient(#ece6e9, #d5d5d5 25px, #c3c4c8 48px, #a5a5a5 88px); }
.options { height: 25px; background: #e6e3e6; border-bottom: 1px solid #c9c9cb; }

/* work area */
.work { flex: 1; display: grid; grid-template-columns: 220px 1fr; min-height: 0; }
.palette { display: flex; flex-direction: column; min-height: 0; min-width: 0; background: #f0f0f0; border-right: 2px solid #999; padding-right: 3px; }
.ptitle { height: 18px; display: flex; justify-content: space-between; align-items: center; background: #c3d1df; padding-right: 5px; }
.ptitle h2 { font-size: 12px; margin-left: -2px; color: #444; }
.pbody { flex: 1; min-height: 0; margin-top: 1px; border: solid #85888d; border-width: 1px 1px 0 0; border-bottom: 1px solid #222; padding: 3px 4px 3px 0; display: flex; flex-direction: column; }
.type { height: 73px; flex: none; border: solid #c9c9c9; border-width: 1px 1px 1px 0; border-top: 2px solid #777; padding: 0 2px; justify-content: flex-start; color: #444; }
.thumb { width: 66px; height: 66px; border: 1px solid #d3d3d3; display: grid; place-items: center; }
.tname { flex: 1; text-align: left; padding-left: 4px; }
.inst { display: flex; padding-top: 2px; height: 25px; flex: none; }
.pick-inst { width: 127px; height: 22px; border: 1px solid #adadad; }
.pick-inst select { padding-left: 2px; }
.etype { gap: 4px; padding-left: 6px; height: 18px; }
.gridbox { flex: 1; display: flex; min-height: 0; }
.props { width: 193px; overflow: hidden; }
.props table { width: 193px; table-layout: fixed; border-collapse: collapse; }
.props tr { height: 18px; }
.props th, .props td { height: 18px; padding: 0 0 1px 2px; line-height: 15px; border-bottom: 1px dotted #6d7484; font-weight: normal; text-align: left; white-space: nowrap; overflow: hidden; }
.props th { padding-left: 7px; width: 96px; border-right: 1px dotted #6d7484; }
.props td { border-right: 1px dotted #6d7484; }
.props .grp th { padding: 0 5px 0 1px; background: #dad8da; border: 0; }
.grp svg { float: right; margin-top: 4px; }
.ro { color: #7d7d7d; }
.props td button { width: 94px; height: 16px; margin-left: -1px; background: #e9e6e9; border: 1px solid #b9bcc2; border-right: 2px solid #aaa; border-bottom: 2px solid #aaa; }
.props td.edit { padding: 0; }
.props td.edit input { display: block; width: 95px; height: 17px; border: 1px solid #000; padding-left: 4px; }
input[type="checkbox"] { appearance: none; display: block; width: 13px; height: 13px; border: 1px solid #6d7484; margin: 2px 0 0 1px; background: #f6f6f6; }
.vbar, .vs { display: flex; flex-direction: column; align-items: center; color: #50565d; }
.vbar { flex: 1; padding: 6px 0; }
.vbar i { width: 15px; height: 195px; background: #cbcbcd; margin: 5px 0 auto; }
.flip { transform: rotate(180deg); }
.left { transform: rotate(90deg); }
.right { transform: rotate(-90deg); }
.pfoot { display: flex; justify-content: space-between; align-items: flex-start; height: 23px; padding: 3px 1px 0; }
.pfoot a { color: #0066cc; }
.pfoot button { width: 74px; height: 19px; border: 1px solid #ccc; color: #888; }
.ptabs { display: flex; height: 23px; }
.ptabs button { height: 22px; padding: 0 9px 0 6px; border: 1px solid #555; border-width: 0 2px 2px 1px; border-radius: 0 0 3px 3px; }
.ptabs .act { padding: 0 6px 0 2px; border-left: 0; }

.view { display: grid; grid-template-columns: 1fr 19px; grid-template-rows: 1fr 19px; min-width: 0; min-height: 0; background: #f1f0f1; border-top: 1px solid #555; }
.canvas { background: #000; position: relative; overflow: hidden; }
.scene { width: 100%; height: 100%; }
.mdi { position: absolute; right: 4px; top: 7px; display: flex; gap: 6px; }
.cube { position: absolute; right: 17px; top: 65px; }
.nav { position: absolute; right: 2px; top: 153px; width: 32px; height: 114px; border-radius: 4px; background: #4c4d4f; display: grid; grid-template-rows: 12px 45px 45px 12px; align-items: center; }
.nav > button:first-child, .nav > button:last-child { justify-self: end; margin-right: 2px; }
.nav .wheel { height: 44px; padding-bottom: 8px; }
.nav .zoom { height: 44px; border-top: 1px solid #2c2c2c; padding-bottom: 14px; margin: 0 2px; }
.vs { padding: 6px 2px 5px 0; }
.vs i { width: 15px; height: 17px; background: #c9cacd; margin: 239px 0 auto; }
.vcb { display: flex; align-items: center; gap: 5px; padding: 0 0 2px 10px; min-width: 0; }
.vcb > button { width: 16px; height: 17px; flex: none; }
.vcb .scale { width: 66px; font-size: 11px; margin-right: -1px; white-space: pre; }
.hs { flex: 1; display: flex; align-items: center; padding: 0 4px 0 2px; color: #50565d; }
.hs i { width: 17px; height: 15px; background: #c9cacd; margin: 0 auto 0 322px; }
.grip { display: grid; place-items: center; }

.status { display: flex; align-items: center; height: 24px; border-top: 1px solid #87a884; background: linear-gradient(#e9e7e9, #cdcdce); padding-right: 86px; }
.status p { width: 371px; height: 20px; line-height: 20px; display: flex; justify-content: flex-end; overflow: hidden; white-space: nowrap; }
.wset { width: 30px; }
.dim { height: 21px; background: #f0f0f0; border: 1px solid #d2d2d2; color: #888; }
.dim svg { color: #aaa; }
.dim select { padding-left: 2px; opacity: 1; }
.s1 { width: 206px; }
.req { width: 50px; gap: 1px; }
.sq { width: 24px; margin-left: 2px; }
.s2 { width: 155px; margin-left: 7px; }
.sel { margin-left: auto; display: flex; gap: 10px; }
.filt { margin-left: -3px; }
.edge { height: 5px; background: #000; border-bottom: 1px solid #93d0f3; }
.pointer { position: absolute; left: 1200px; top: 129px; }
```
